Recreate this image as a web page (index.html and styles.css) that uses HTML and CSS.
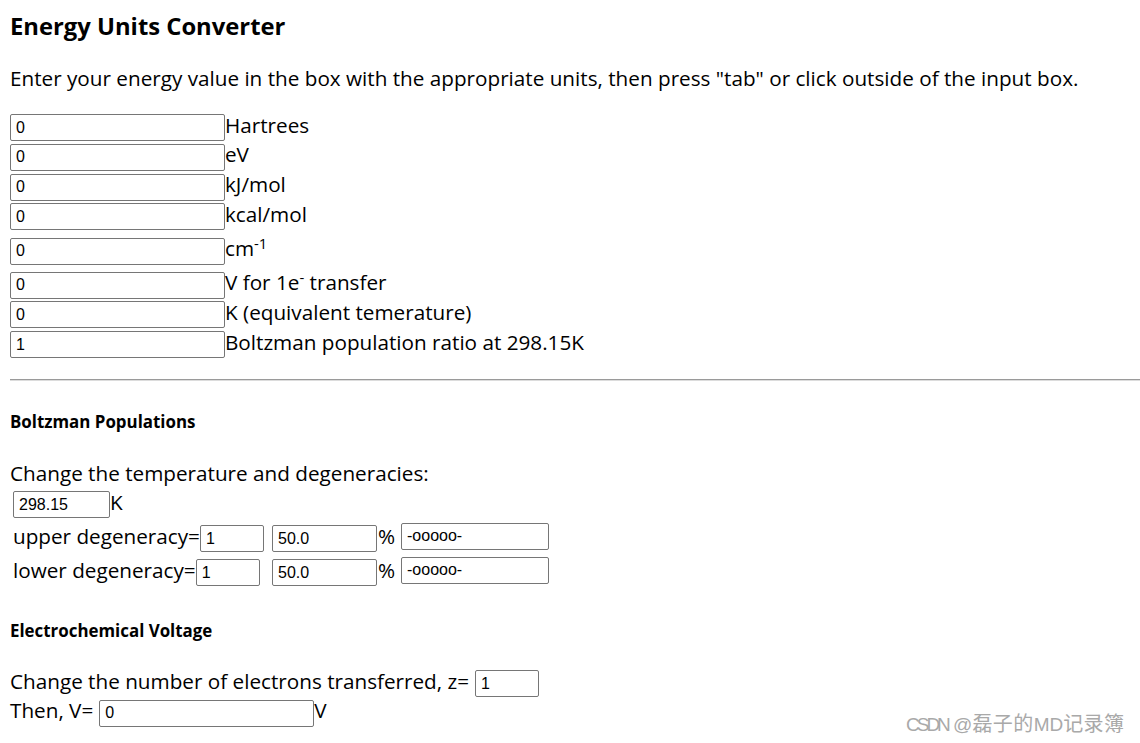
FILE: index.html
```html
<!DOCTYPE html>
<html>
<head>
<meta charset="utf-8">
<title>Energy Units Converter</title>
<link rel="stylesheet" href="styles.css">
</head>
<body>
<div class="page">
  <h3 class="title">Energy Units Converter</h3>
  <p class="intro">Enter your energy value in the box with the appropriate units, then press "tab" or click outside of the input box.</p>

  <div class="units">
    <div class="row"><input class="inp w215" type="text" value="0"><span class="lbl">Hartrees</span></div>
    <div class="row"><input class="inp w215" type="text" value="0"><span class="lbl">eV</span></div>
    <div class="row"><input class="inp w215" type="text" value="0"><span class="lbl">kJ/mol</span></div>
    <div class="row"><input class="inp w215" type="text" value="0"><span class="lbl">kcal/mol</span></div>
    <div class="row row-sup1"><input class="inp w215" type="text" value="0"><span class="lbl">cm<sup>-1</sup></span></div>
    <div class="row row-sup2"><input class="inp w215" type="text" value="0"><span class="lbl">V for 1e<sup>-</sup> transfer</span></div>
    <div class="row"><input class="inp w215" type="text" value="0"><span class="lbl">K (equivalent temerature)</span></div>
    <div class="row"><input class="inp w215" type="text" value="1"><span class="lbl">Boltzman population ratio at 298.15K</span></div>
  </div>

  <hr class="rule">

  <h5 class="sub sub-boltz">Boltzman Populations</h5>
  <p class="line line-change">Change the temperature and degeneracies:</p>

  <div class="boltz">
    <div class="cell"><input class="inp w97" type="text" value="298.15"><span class="lbl">K</span></div>
    <div class="cell"></div>
    <div class="cell"></div>

    <div class="cell"><span class="lbl">upper degeneracy=</span><input class="inp w64" type="text" value="1"></div>
    <div class="cell"><input class="inp w105" type="text" value="50.0"><span class="lbl pct">%</span></div>
    <div class="cell"><input class="inp w148" type="text" value="-ooooo-"></div>

    <div class="cell"><span class="lbl">lower degeneracy=</span><input class="inp w64" type="text" value="1"></div>
    <div class="cell"><input class="inp w105" type="text" value="50.0"><span class="lbl pct">%</span></div>
    <div class="cell"><input class="inp w148" type="text" value="-ooooo-"></div>
  </div>

  <h5 class="sub sub-echem">Electrochemical Voltage</h5>
  <div class="row row-z"><span class="lbl">Change the number of electrons transferred, z=</span><input class="inp w64 gap-left" type="text" value="1"></div>
  <div class="row"><span class="lbl">Then, V=</span><input class="inp w215 gap-left" type="text" value="0"><span class="lbl">V</span></div>
</div>
<div class="watermark"><span class="wm-latin">CSDN</span> @<span class="wm-cjk">磊子的</span>MD<span class="wm-cjk">记录簿</span></div>
</body>
</html>
```

FILE: styles.css
```css
html, body {
  margin: 0;
  padding: 0;
  background: #ffffff;
}

body {
  font-family: "Open Sans", "Noto Sans", sans-serif;
  font-size: 20.7px;
  color: #000;
  width: 1140px;
  height: 743px;
  overflow: hidden;
  position: relative;
}

.page {
  padding: 0 0 0 10px;
}

.title {
  margin: 11px 0 0;
  font-size: 23.8px;
  font-weight: 700;
  line-height: 30px;
}

.intro {
  margin: 23.5px 0 0;
  line-height: 27px;
  white-space: nowrap;
}

.units {
  margin-top: 20.2px;
}

.row {
  display: flex;
  align-items: baseline;
  height: 29.7px;
}

.row-sup1 { margin-top: 5px; }
.row-sup2 { margin-top: 4px; }

.lbl {
  line-height: 27px;
  white-space: nowrap;
}

.lbl sup {
  font-size: 0.72em;
  line-height: 0;
  vertical-align: 0.5em;
}

.inp {
  box-sizing: border-box;
  height: 27px;
  margin: 0;
  padding: 0 4px 0 5px;
  border: 1px solid #767676;
  border-radius: 2px;
  font-family: "Liberation Sans", Arial, sans-serif;
  font-size: 16px;
  color: #000;
  background: #fff;
  outline: none;
}

.w215 { width: 215px; }
.w97 { width: 97px; }
.w64 { width: 64px; }
.w105 { width: 105px; }
.w148 { width: 148px; }

.gap-left { margin-left: 6px; }

.rule {
  margin: 21px 0 0;
  height: 0;
  border: 0;
  border-top: 1px solid #9a9a9a;
  border-bottom: 1px solid #dcdcdc;
}

.sub {
  font-size: 16.9px;
  font-weight: 700;
  line-height: 22px;
  margin: 0;
}

.sub-boltz { margin-top: 30px; }

.line {
  margin: 26.5px 0 0;
  line-height: 27px;
}

.boltz {
  display: grid;
  grid-template-columns: 255px 125px 148px;
  grid-auto-rows: 34px;
  column-gap: 4px;
  margin: 2px 0 0 3px;
}

.cell {
  display: flex;
  align-items: baseline;
}

.pct { margin-left: 1px; }

.sub-echem { margin-top: 29.2px; }

.row-z { margin-top: 26px; height: 29.5px; }

.watermark {
  position: absolute;
  left: 906px;
  top: 711px;
  font-family: "Liberation Sans", "Noto Sans CJK SC", sans-serif;
  font-size: 19px;
  line-height: 24px;
  color: #a9a9a9;
  white-space: nowrap;
}

.wm-latin {
  letter-spacing: -3px;
}

.wm-cjk {
  font-family: "Noto Sans CJK SC", sans-serif;
  font-size: 20px;
  letter-spacing: 0.4px;
}
```
